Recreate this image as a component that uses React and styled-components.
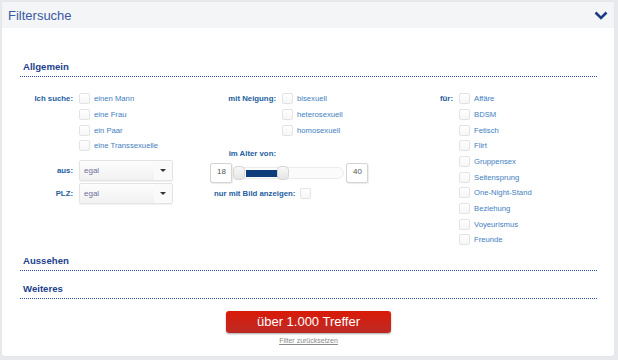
import React from 'react';
import styled, { createGlobalStyle } from 'styled-components';

const GlobalStyle = createGlobalStyle`
  html, body {
    margin: 0;
    padding: 0;
    background: #e8e9ed;
    font-family: 'Liberation Sans', Arial, sans-serif;
  }
`;

const Page = styled.div`
  width: 618px;
  height: 360px;
  padding: 2px 4px 4px 2px;
  box-sizing: border-box;
`;

const Panel = styled.div`
  background: #fff;
  height: 354px;
  border-radius: 2px;
  box-shadow: 0 0 1px rgba(0, 0, 0, 0.12);
  display: flex;
  flex-direction: column;
`;

const Header = styled.div`
  height: 26px;
  background: #f4f5f7;
  display: flex;
  align-items: center;
  justify-content: space-between;
  padding: 0 6px;
`;

const Title = styled.div`
  font-size: 13px;
  color: #3a5aa3;
  margin-top: 1px;
`;

const Body = styled.div`
  padding: 33px 17px 0 18px;
  display: flex;
  flex-direction: column;
`;

const SectionTitle = styled.div`
  font-size: 9.6px;
  font-weight: bold;
  color: #233f8c;
  line-height: 12px;
  padding: 0 0 3px 3px;
  border-bottom: 1px dotted #2b4a9e;
  margin-top: ${(p) => p.top || 0}px;
`;

const Columns = styled.div`
  display: flex;
  margin-top: 14px;
`;

const Column = styled.div`
  width: ${(p) => p.width}px;
  display: flex;
  flex-direction: column;
`;

const Row = styled.div`
  display: flex;
  align-items: center;
  height: ${(p) => p.h || 15.67}px;
  margin-top: ${(p) => p.top || 0}px;
  padding-left: ${(p) => p.indent || 0}px;
  gap: ${(p) => p.gap ?? 6}px;
`;

const Label = styled.div`
  width: ${(p) => p.width}px;
  text-align: right;
  font-size: 7.8px;
  font-weight: bold;
  color: #1d5e9e;
  white-space: nowrap;
  flex-shrink: 0;
`;

const FreeLabel = styled(Label)`
  width: auto;
`;

const Option = styled.label`
  display: flex;
  align-items: center;
  gap: 4px;
  font-size: 7.7px;
  color: #3f7ec0;
  white-space: nowrap;
`;

const Box = styled.span`
  width: 9px;
  height: 9px;
  border: 1px solid #e3e3e3;
  border-radius: 2px;
  background: linear-gradient(#ffffff, #f6f6f6);
  flex-shrink: 0;
`;

const Select = styled.div`
  width: 94px;
  height: 21px;
  box-sizing: border-box;
  border: 1px solid #e3e3e3;
  border-radius: 2px;
  background: linear-gradient(#fdfdfd, #f1f1f1);
  box-shadow: 0 1px 1px rgba(0, 0, 0, 0.06);
  display: flex;
  align-items: center;
  font-size: 8px;
  color: #6e6ea0;
`;

const SelectText = styled.span`
  flex: 1;
  padding-left: 4px;
`;

const SelectArrow = styled.span`
  width: 18px;
  height: 100%;
  background: #fafafa;
  display: flex;
  align-items: center;
  justify-content: center;
  &::after {
    content: '';
    border-left: 3px solid transparent;
    border-right: 3px solid transparent;
    border-top: 3px solid #333;
  }
`;

const SliderRow = styled.div`
  display: flex;
  align-items: center;
  height: 20px;
  margin-top: 3px;
`;

const NumBox = styled.div`
  width: 22px;
  height: 20px;
  box-sizing: border-box;
  border: 1px solid #d4d4d4;
  border-radius: 2px;
  background: #fff;
  box-shadow: 1px 1px 1px rgba(0, 0, 0, 0.08);
  font-size: 8px;
  color: #555;
  padding: 3px 0 0 6px;
`;

const Track = styled.div`
  position: relative;
  width: 112px;
  height: 12px;
  box-sizing: border-box;
  border: 1px solid #ececec;
  border-radius: 6px;
  background: #fbfbfb;
  margin-right: 2px;
`;

const Fill = styled.div`
  position: absolute;
  top: 2px;
  height: 7px;
  background: #0d3d7a;
`;

const Handle = styled.div`
  position: absolute;
  top: -2px;
  width: 12px;
  height: 14px;
  box-sizing: border-box;
  border: 1px solid #d6d6d6;
  border-radius: 4px;
  background: linear-gradient(#f8f8f8, #e6e6e6);
`;

const Footer = styled.div`
  display: flex;
  flex-direction: column;
  align-items: center;
  margin-top: 12px;
`;

const SubmitButton = styled.button`
  width: 165px;
  height: 22px;
  border: none;
  border-radius: 3px;
  background: linear-gradient(#da1a08, #bd2b26);
  box-shadow: 0 1px 2px rgba(0, 0, 0, 0.35);
  color: #fff;
  font-family: 'Liberation Sans', Arial, sans-serif;
  font-size: 13px;
  padding: 0;
  cursor: pointer;
`;

const ResetLink = styled.a`
  margin-top: 4px;
  font-size: 7px;
  color: #8a8a8a;
  text-decoration: underline;
`;

const Chevron = () => (
  <svg width="14" height="9" viewBox="0 0 14 9">
    <polyline points="1.5,1.5 7,7 12.5,1.5" fill="none" stroke="#1c3c84" strokeWidth="2.6" />
  </svg>
);

const Check = ({ children }) => (
  <Option>
    <Box />
    {children}
  </Option>
);

const AgeSlider = ({ min, max, from, to }) => {
  const span = 98;
  const a = 1 + ((from - min) / (max - min)) * span;
  const b = 1 + ((to - min) / (max - min)) * span;
  return (
    <SliderRow>
      <NumBox>{from}</NumBox>
      <Track>
        <Fill style={{ left: a + 12, width: b - a - 12 }} />
        <Handle style={{ left: a - 1 }} />
        <Handle style={{ left: b - 1 }} />
      </Track>
      <NumBox>{to}</NumBox>
    </SliderRow>
  );
};

const searchFor = ['einen Mann', 'eine Frau', 'ein Paar', 'eine Transsexuelle'];
const orientation = ['bisexuell', 'heterosexuell', 'homosexuell'];
const purposes = [
  'Affäre', 'BDSM', 'Fetisch', 'Flirt', 'Gruppensex',
  'Seitensprung', 'One-Night-Stand', 'Beziehung', 'Voyeurismus', 'Freunde',
];

const CheckGroup = ({ label, labelWidth, items }) =>
  items.map((item, i) => (
    <Row key={item}>
      <Label width={labelWidth}>{i === 0 ? label : ''}</Label>
      <Check>{item}</Check>
    </Row>
  ));

export default function App() {
  return (
    <Page>
      <GlobalStyle />
      <Panel>
        <Header>
          <Title>Filtersuche</Title>
          <Chevron />
        </Header>
        <Body>
          <SectionTitle>Allgemein</SectionTitle>
          <Columns>
            <Column width={190}>
              <CheckGroup label="Ich suche:" labelWidth={53} items={searchFor} />
              <Row h={21} top={6}>
                <Label width={53}>aus:</Label>
                <Select><SelectText>egal</SelectText><SelectArrow /></Select>
              </Row>
              <Row h={21} top={2}>
                <Label width={53}>PLZ:</Label>
                <Select><SelectText>egal</SelectText><SelectArrow /></Select>
              </Row>
            </Column>
            <Column width={210}>
              <CheckGroup label="mit Neigung:" labelWidth={66} items={orientation} />
              <Row h={12} top={10}>
                <Label width={66}>im Alter von:</Label>
              </Row>
              <AgeSlider min={18} max={67} from={18} to={40} />
              <Row h={12} top={5} indent={4} gap={5}>
                <FreeLabel>nur mit Bild anzeigen:</FreeLabel>
                <Box />
              </Row>
            </Column>
            <Column width={177}>
              <CheckGroup label="für:" labelWidth={33} items={purposes} />
            </Column>
          </Columns>
          <SectionTitle top={7}>Aussehen</SectionTitle>
          <SectionTitle top={12}>Weiteres</SectionTitle>
          <Footer>
            <SubmitButton>über 1.000 Treffer</SubmitButton>
            <ResetLink href="#">Filter zurücksetzen</ResetLink>
          </Footer>
        </Body>
      </Panel>
    </Page>
  );
}
